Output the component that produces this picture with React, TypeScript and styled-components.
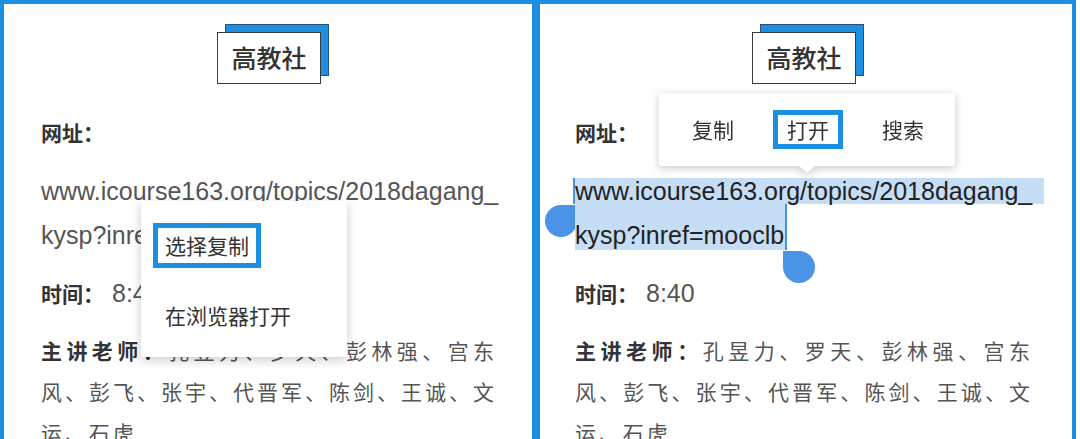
import React from "react";
import styled, { createGlobalStyle, css } from "styled-components";

const BLUE = "#1d8fe2";
const HANDLE = "#4a93e6";

const GlobalStyle = createGlobalStyle`
  html, body {
    margin: 0;
    padding: 0;
    background: #fff;
  }
  body {
    font-family: "Noto Sans CJK SC", "Liberation Sans", sans-serif;
  }
`;

const Frame = styled.div`
  width: 1076px;
  height: 439px;
  box-sizing: border-box;
  padding: 4px 4px 0;
  background: ${BLUE};
  display: grid;
  grid-template-columns: 528px 532px;
  column-gap: 8px;
`;

const Panel = styled.section<{ $right?: boolean }>`
  position: relative;
  overflow: hidden;
  background: #fff;
  display: flex;
  flex-direction: column;
  padding: ${(p) => (p.$right ? "20px 39px 0 35px" : "20px 35px 0 37px")};
`;

const LogoWrap = styled.div`
  align-self: center;
  position: relative;
  padding: 8px 8px 0;
  &::before {
    content: "";
    position: absolute;
    top: 0;
    left: 16px;
    right: 0;
    bottom: 8px;
    background: ${BLUE};
    border: 1px solid #2b4f78;
  }
`;

const LogoBox = styled.div`
  position: relative;
  height: 52px;
  box-sizing: border-box;
  padding: 0 13px;
  border: 1.5px solid #3a3a3a;
  background: #fff;
  font-size: 25px;
  line-height: 49px;
  font-weight: 500;
  color: #333;
`;

const Label = styled.div`
  margin-top: 33px;
  font-size: 21px;
  line-height: 30px;
  font-weight: 700;
  color: #333;
`;

const UrlBlock = styled.div`
  margin-top: 31px;
  display: flex;
  flex-direction: column;
  align-items: flex-start;
`;

const UrlLine = styled.span<{ $second?: boolean; $selected?: boolean }>`
  position: relative;
  font-family: "Liberation Sans", Arial, sans-serif;
  font-size: 25px;
  white-space: nowrap;
  color: #555;
  line-height: 26px;
  ${(p) =>
    p.$second &&
    css`
      padding-top: 17px;
      line-height: 29px;
    `}
  ${(p) =>
    p.$selected &&
    css`
      color: #222;
      background: #c6ddf6;
      padding-right: ${p.$second ? "1px" : "12px"};
      ${p.$second
        ? css`border-right: 2px solid ${HANDLE};`
        : css`border-left: 2px solid ${HANDLE}; margin-left: -2px;`}
    `}
`;

const Handle = styled.span<{ $end?: boolean }>`
  position: absolute;
  top: calc(100% + 1px);
  width: 32px;
  height: 32px;
  background: ${HANDLE};
  ${(p) =>
    p.$end
      ? css`
          left: calc(100% - 2px);
          border-radius: 0 50% 50% 50%;
        `
      : css`
          right: calc(100% - 2px);
          border-radius: 50% 0 50% 50%;
        `}
`;

const InfoRow = styled.div`
  margin-top: 28px;
  font-size: 21px;
  line-height: 30px;
  color: #333;
`;

const Bold = styled.strong`
  font-weight: 700;
  color: #333;
`;

const Time = styled.span`
  margin-left: 8px;
  font-family: "Liberation Sans", Arial, sans-serif;
  font-size: 25px;
  color: #555;
`;

const Teachers = styled.p`
  margin: 22px 0 0;
  font-size: 21px;
  line-height: 41px;
  letter-spacing: 2.9px;
  text-align: justify;
  color: #555;
`;

const ContextMenu = styled.div`
  position: absolute;
  left: 137px;
  top: 197px;
  width: 206px;
  height: 156px;
  box-sizing: border-box;
  padding: 22px 12px 0;
  background: #fff;
  box-shadow: 0 3px 10px rgba(0, 0, 0, 0.2);
  display: flex;
  flex-direction: column;
  align-items: flex-start;
  gap: 25px;
`;

const MenuItem = styled.div<{ $active?: boolean }>`
  font-size: 21px;
  line-height: 27px;
  padding: 4px 7px;
  border: 5px solid ${(p) => (p.$active ? BLUE : "transparent")};
  color: #333;
`;

const Popup = styled.div`
  position: absolute;
  left: 119px;
  top: 89px;
  width: 296px;
  height: 73px;
  box-sizing: border-box;
  padding: 0 17px 0 19px;
  background: #fff;
  border-radius: 3px;
  filter: drop-shadow(0 2px 4px rgba(0, 0, 0, 0.22));
  display: flex;
  align-items: center;
  justify-content: space-between;
  &::after {
    content: "";
    position: absolute;
    top: 100%;
    left: 50%;
    transform: translateX(-50%);
    border-left: 8px solid transparent;
    border-right: 8px solid transparent;
    border-top: 7px solid #fff;
  }
`;

const PopupItem = styled.div<{ $active?: boolean }>`
  font-size: 21px;
  line-height: 29px;
  padding: 0 9px;
  border: 5px solid ${(p) => (p.$active ? BLUE : "transparent")};
  color: #333;
`;

const teachers = "孔昱力、罗天、彭林强、宫东风、彭飞、张宇、代晋军、陈剑、王诚、文运、石虎";

const Content = ({ selected }: { selected?: boolean }) => (
  <>
    <LogoWrap>
      <LogoBox>高教社</LogoBox>
    </LogoWrap>
    <Label>网址：</Label>
    <UrlBlock>
      <UrlLine $selected={selected}>
        www.icourse163.org/topics/2018dagang_
        {selected && <Handle />}
      </UrlLine>
      <UrlLine $second $selected={selected}>
        kysp?inref=mooclb
        {selected && <Handle $end />}
      </UrlLine>
    </UrlBlock>
    <InfoRow>
      <Bold>时间：</Bold>
      <Time>8:40</Time>
    </InfoRow>
    <Teachers>
      <Bold>主讲老师：</Bold>
      {teachers}
    </Teachers>
  </>
);

export default function App() {
  return (
    <>
      <GlobalStyle />
      <Frame>
        <Panel>
          <Content />
          <ContextMenu>
            <MenuItem $active>选择复制</MenuItem>
            <MenuItem>在浏览器打开</MenuItem>
          </ContextMenu>
        </Panel>
        <Panel $right>
          <Content selected />
          <Popup>
            <PopupItem>复制</PopupItem>
            <PopupItem $active>打开</PopupItem>
            <PopupItem>搜索</PopupItem>
          </Popup>
        </Panel>
      </Frame>
    </>
  );
}
